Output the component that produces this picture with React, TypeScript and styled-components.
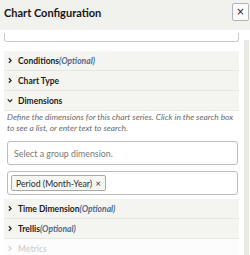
import styled, { createGlobalStyle } from "styled-components";

const Global = createGlobalStyle`
  html, body {
    margin: 0;
    padding: 0;
    background: #ffffff;
  }
  body {
    font-family: Lato, "Open Sans", "Liberation Sans", sans-serif;
    color: #222;
  }
`;

const Panel = styled.div`
  width: 250px;
  height: 255px;
  display: flex;
  flex-direction: column;
  overflow: hidden;
  background: #fff;
`;

const Header = styled.div`
  height: 30px;
  flex-shrink: 0;
  display: flex;
  align-items: flex-start;
  justify-content: space-between;
  background: #f1f1ee;
  padding: 0 1px 0 4px;
  & h2 {
    margin: 6px 0 0;
    font-size: 11px;
    line-height: 14px;
    font-weight: 700;
    color: #161616;
  }
`;

const CloseButton = styled.button`
  width: 17px;
  height: 18px;
  margin-top: 3px;
  padding: 0;
  border: 1px solid #b5b5b5;
  border-radius: 2px;
  background: #fafafa;
  color: #222;
  font-size: 10px;
  line-height: 14px;
  font-family: "DejaVu Sans", sans-serif;
`;

const Body = styled.div`
  flex: 1;
  display: flex;
  min-height: 0;
`;

const Content = styled.div`
  flex: 1;
  padding: 0 5px 0 4px;
  display: flex;
  flex-direction: column;
  overflow: hidden;
  & > * {
    flex-shrink: 0;
  }
`;

const Scrollbar = styled.div`
  width: 5px;
  margin: 10px 1px 0 0;
  background: #e9e9e6;
`;

const PrevFieldEnd = styled.div`
  height: 8px;
  margin: 3px 0 9px 0;
  border: 1px solid #c9c9c6;
  border-top: none;
  border-radius: 0 0 3px 3px;
`;

const Section = styled.div<{ $faded?: boolean }>`
  height: 19px;
  display: flex;
  align-items: center;
  gap: 5px;
  padding-left: 3px;
  background: #f4f5f1;
  border-bottom: 1px solid #e6e7e1;
  font-size: 8.5px;
  font-weight: 700;
  color: #1c1c1c;
  opacity: ${(p) => (p.$faded ? 0.2 : 1)};
  & em {
    font-weight: 700;
    color: #56698a;
  }
`;

const Chevron = ({ open }: { open?: boolean }) => (
  <svg width="6" height="7" viewBox="0 0 8 8" fill="none">
    {open ? (
      <path d="M1 2.5 L4 5.5 L7 2.5" stroke="#222" strokeWidth="1.6" />
    ) : (
      <path d="M2.5 1 L5.5 4 L2.5 7" stroke="#222" strokeWidth="1.6" />
    )}
  </svg>
);

const Hint = styled.p`
  margin: 1px 2px 8px 3px;
  font-size: 8.4px;
  line-height: 10.5px;
  font-style: italic;
  color: #6a6a6a;
`;

const Field = styled.div<{ $last?: boolean }>`
  height: 22px;
  margin: 0 1px ${(p) => (p.$last ? 4 : 6)}px 3px;
  border: 1px solid #bdbdb9;
  border-radius: 3px;
  display: flex;
  align-items: center;
  padding: 0 6px;
  font-size: 8.8px;
  color: #777;
`;

const Chip = styled.span`
  display: inline-flex;
  align-items: center;
  gap: 3px;
  height: 14px;
  padding: 0 4px;
  margin-left: -3px;
  border: 1px solid #a9a9a5;
  border-radius: 2px;
  background: #f6f6f3;
  color: #2a2a2a;
  font-size: 8.7px;
  & b {
    font-weight: 400;
    font-family: "DejaVu Sans", sans-serif;
    font-size: 7.5px;
  }
`;

export default function App() {
  return (
    <Panel>
      <Global />
      <Header>
        <h2>Chart Configuration</h2>
        <CloseButton>×</CloseButton>
      </Header>
      <Body>
        <Content>
          <PrevFieldEnd />
          <Section>
            <Chevron />
            <span>
              Conditions<em>(Optional)</em>
            </span>
          </Section>
          <Section>
            <Chevron />
            <span>Chart Type</span>
          </Section>
          <Section>
            <Chevron open />
            <span>Dimensions</span>
          </Section>
          <Hint>
            Define the dimensions for this chart series. Click in the search box
            <br />
            to see a list, or enter text to search.
          </Hint>
          <Field>Select a group dimension.</Field>
          <Field $last>
            <Chip>
              Period (Month-Year) <b>×</b>
            </Chip>
          </Field>
          <Section>
            <Chevron />
            <span>
              Time Dimension<em>(Optional)</em>
            </span>
          </Section>
          <Section>
            <Chevron />
            <span>
              Trellis<em>(Optional)</em>
            </span>
          </Section>
          <Section $faded>
            <Chevron />
            <span>Metrics</span>
          </Section>
        </Content>
        <Scrollbar />
      </Body>
    </Panel>
  );
}
